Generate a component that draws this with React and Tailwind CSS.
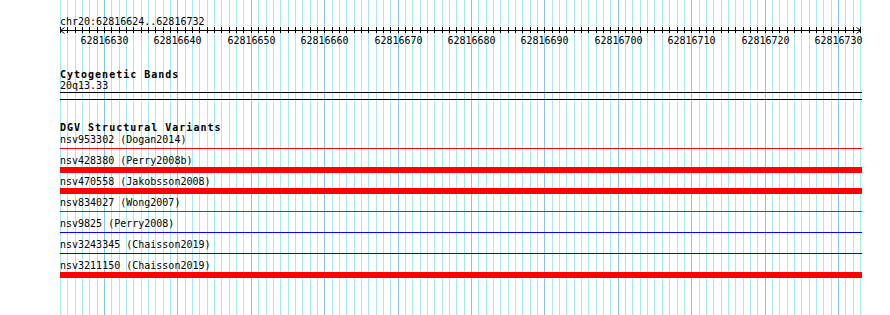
import React from 'react';

const START = 62816624;
const BASES = 109;
const LEFT = 60;
const WIDTH = 800;

const baseX = (i) => Math.round(LEFT + (i * WIDTH) / BASES);

const variants = [
  { name: 'nsv953302 (Dogan2014)', kind: 'thin', color: 'red' },
  { name: 'nsv428380 (Perry2008b)', kind: 'thick', color: 'red' },
  { name: 'nsv470558 (Jakobsson2008)', kind: 'thick', color: 'red' },
  { name: 'nsv834027 (Wong2007)', kind: 'thin', color: 'red' },
  { name: 'nsv9825 (Perry2008)', kind: 'thin', color: 'blue' },
  { name: 'nsv3243345 (Chaisson2019)', kind: 'thin', color: 'blue' },
  { name: 'nsv3211150 (Chaisson2019)', kind: 'thick', color: 'red' },
];

// vertical base guidelines behind the tracks
function Guidelines() {
  const lines = [];
  for (let i = 0; i <= BASES; i++) {
    const major = (START + i) % 10 === 0;
    lines.push(
      <rect
        key={i}
        x={baseX(i)}
        y={0}
        width={1}
        height={315}
        fill={major ? '#86c6ea' : '#a8e8ee'}
      />
    );
  }
  return (
    <svg className="absolute inset-0" width="890" height="315" shapeRendering="crispEdges">
      {lines}
    </svg>
  );
}

function Ruler() {
  const ticks = [];
  const labels = [];
  for (let i = 0; i <= BASES; i++) {
    const x = baseX(i) - LEFT + 0.5;
    ticks.push(<line key={i} x1={x} x2={x} y1={1} y2={7} stroke="#000" strokeWidth="1" />);
    if ((START + i) % 10 === 0) {
      labels.push(
        <text
          key={i}
          x={x}
          y={17.5}
          textAnchor="middle"
          fontFamily="'DejaVu Sans Mono', monospace"
          fontSize="10"
          fill="#000"
        >
          {START + i}
        </text>
      );
    }
  }
  return (
    <svg width="802" height="22" className="block overflow-visible">
      <g shapeRendering="crispEdges">
        <line x1={0} x2={801} y1={4.5} y2={4.5} stroke="#000" strokeWidth="1" />
        {ticks}
      </g>
      <path d="M4.5 1.5 L0.5 4.5 L4.5 7.5" fill="none" stroke="#000" strokeWidth="1" />
      <path d="M796.5 1.5 L800.5 4.5 L796.5 7.5" fill="none" stroke="#000" strokeWidth="1" />
      {labels}
    </svg>
  );
}

function VariantRow({ name, kind, color }) {
  const bg = color === 'red' ? 'bg-[#ff0000]' : 'bg-[#0000ff]';
  return (
    <div className="h-[21px]">
      <div className="leading-[14px] h-[13px] whitespace-pre">{name}</div>
      <div className="h-[6px] w-[802px]">
        {kind === 'thick' ? (
          <div className={`h-[6px] w-full ${bg}`} />
        ) : (
          <div className={`mt-[2px] h-[1px] w-full ${bg}`} />
        )}
      </div>
    </div>
  );
}

export default function App() {
  return (
    <div className="relative w-[890px] h-[315px] overflow-hidden bg-white text-black">
      <Guidelines />
      <div className="relative pl-[60px] pt-[16px] font-['DejaVu_Sans_Mono',monospace] text-[10px]">
        <div className="leading-[12px] h-[10px]">chr20:62816624..62816732</div>
        <div>
          <Ruler />
        </div>

        <div className="mt-[21px] leading-[11px] h-[11px] font-bold tracking-[1px]">
          Cytogenetic Bands
        </div>
        <div className="leading-[12px] h-[11px]">20q13.33</div>
        <div className="mt-[1px] h-[1px] w-[802px] bg-black" />
        <div className="mt-[6px] h-[1px] w-[802px] bg-black" />

        <div className="mt-[22px] leading-[11px] h-[11px] font-bold tracking-[1px]">
          DGV Structural Variants
        </div>
        {variants.map((v) => (
          <VariantRow key={v.name} {...v} />
        ))}
      </div>
    </div>
  );
}
